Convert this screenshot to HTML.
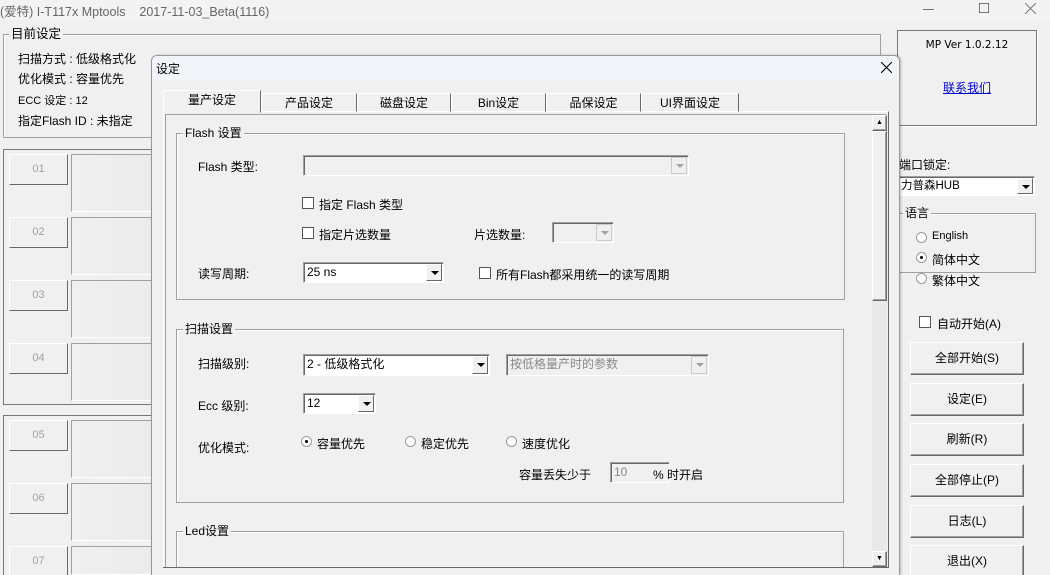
<!DOCTYPE html>
<html style="width:1050px;height:575px;overflow:hidden"><head><meta charset="utf-8"><style>
*{box-sizing:border-box;margin:0;padding:0}
body{width:1050px;height:575px;overflow:hidden;background:#f0f0f0;position:relative;font-family:"Liberation Sans","Noto Sans CJK SC",sans-serif;font-size:12px;color:#000}
.a{position:absolute;white-space:nowrap}
.grp{position:absolute;border:1px solid #a0a0a0;box-shadow:inset 1px 1px 0 #fff}
.gl{position:absolute;top:-8px;left:8px;background:#f0f0f0;padding:0 2px;line-height:14px}
.btn{position:absolute;background:#f0f0f0;border:1px solid;border-color:#fff #696969 #696969 #fff;box-shadow:inset -1px -1px 0 #a0a0a0;text-align:center}
.nb{position:absolute;background:#f0f0f0;border:1px solid;border-color:#fff #696969 #696969 #fff;color:#a0a0a0;text-align:center;line-height:28px;font-size:11px}
.slot{position:absolute;border-left:1px solid #a0a0a0;border-top:1px solid #a0a0a0;border-bottom:1px solid #fff;background:linear-gradient(90deg,#f0f0f0 0%,#ebebeb 100%)}
.combo{position:absolute;background:#fff;border:1px solid;border-color:#a0a0a0 #fff #fff #a0a0a0;box-shadow:inset 1px 1px 0 #696969;line-height:18px;padding-left:3px}
.combo.dis{background:#f0f0f0;color:#888}
.arr{position:absolute;right:1px;top:1px;bottom:1px;width:16px;background:#f0f0f0;border:1px solid;border-color:#fff #696969 #696969 #fff}
.arr:after{content:"";position:absolute;left:4px;top:6px;border:4px solid transparent;border-top:4px solid #000;border-bottom:0}
.combo.dis .arr:after{border-top-color:#a0a0a0}
.cb{position:absolute;width:12px;height:12px;border:1px solid #555;background:#fff}
.rd{position:absolute;width:11px;height:11px;border-radius:50%;border:1px solid #999;background:#fff}
.rd.on:after{content:"";position:absolute;left:3px;top:3px;width:3px;height:3px;border-radius:50%;background:#000}
.tab{position:absolute;top:93px;height:19px;border:1px solid;border-color:#fff #696969 transparent #fff;text-align:center;line-height:18px}
</style></head><body>
<div class="a" style="left:0;top:0;width:1050px;height:20px;background:#f3f3f3"></div>
<div class="a" style="left:0;top:1px;color:#666;font-size:12.5px">(爱特) I-T117x Mptools &nbsp;&nbsp; 2017-11-03_Beta(1116)</div>
<div class="a" style="left:923px;top:9px;width:11px;height:1px;background:#777"></div>
<div class="a" style="left:979px;top:3px;width:10px;height:10px;border:1px solid #777"></div>
<svg class="a" style="left:1025px;top:3px" width="11" height="11"><path d="M0 0L11 11M11 0L0 11" stroke="#777" stroke-width="1"/></svg>

<div class="grp" style="left:3px;top:34px;width:878px;height:104px"><span class="gl" style="left:5px;font-size:12.5px">目前设定</span></div>
<div class="a" style="left:18px;top:50px">扫描方式 : 低级格式化</div>
<div class="a" style="left:18px;top:70px">优化模式 : 容量优先</div>
<div class="a" style="left:18px;top:92px;font-size:11px">ECC 设定 : 12</div>
<div class="a" style="left:18px;top:112px">指定Flash ID : 未指定</div>

<div class="a" style="left:3px;top:149px;width:150px;height:256px;border:1px solid #777;border-right:0"></div>
<div class="a" style="left:3px;top:415px;width:150px;height:170px;border:1px solid #777;border-right:0"></div>
<div class="nb" style="left:9px;top:154px;width:59px;height:31px">01</div>
<div class="slot" style="left:71px;top:154px;width:80px;height:58px"></div>
<div class="nb" style="left:9px;top:217px;width:59px;height:31px">02</div>
<div class="slot" style="left:71px;top:217px;width:80px;height:58px"></div>
<div class="nb" style="left:9px;top:280px;width:59px;height:31px">03</div>
<div class="slot" style="left:71px;top:280px;width:80px;height:58px"></div>
<div class="nb" style="left:9px;top:343px;width:59px;height:31px">04</div>
<div class="slot" style="left:71px;top:343px;width:80px;height:58px"></div>
<div class="nb" style="left:9px;top:420px;width:59px;height:31px">05</div>
<div class="slot" style="left:71px;top:420px;width:80px;height:58px"></div>
<div class="nb" style="left:9px;top:483px;width:59px;height:31px">06</div>
<div class="slot" style="left:71px;top:483px;width:80px;height:58px"></div>
<div class="nb" style="left:9px;top:546px;width:59px;height:31px">07</div>
<div class="slot" style="left:71px;top:546px;width:80px;height:29px"></div>

<div class="a" style="left:897px;top:30px;width:140px;height:96px;border:1px solid #777;box-shadow:1px 1px 0 #fff"></div>
<div class="a" style="left:897px;top:39px;width:140px;text-align:center;font-family:'DejaVu Sans',sans-serif;font-size:10.5px">MP Ver 1.0.2.12</div>
<div class="a" style="left:897px;top:79px;width:140px;text-align:center;color:#0000cc;text-decoration:underline">联系我们</div>
<div class="a" style="left:899px;top:156px">端口锁定:</div>
<div class="combo" style="left:898px;top:176px;width:137px;height:20px;padding-left:2px;font-size:11.5px">力普森HUB<div class="arr"></div></div>
<div class="grp" style="left:899px;top:213px;width:137px;height:60px"><span class="gl" style="left:3px">语言</span></div>
<div class="rd" style="left:916px;top:232px"></div><div class="a" style="left:932px;top:230px;font-size:11px">English</div>
<div class="rd on" style="left:916px;top:252px"></div><div class="a" style="left:932px;top:251px">简体中文</div>
<div class="rd" style="left:916px;top:273px"></div><div class="a" style="left:932px;top:272px">繁体中文</div>
<div class="cb" style="left:919px;top:316px"></div><div class="a" style="left:937px;top:315px">自动开始(A)</div>
<div class="btn" style="left:910px;top:342px;width:114px;height:33px;line-height:31px">全部开始(S)</div>
<div class="btn" style="left:910px;top:383px;width:114px;height:33px;line-height:31px">设定(E)</div>
<div class="btn" style="left:910px;top:423px;width:114px;height:33px;line-height:31px">刷新(R)</div>
<div class="btn" style="left:910px;top:464px;width:114px;height:33px;line-height:31px">全部停止(P)</div>
<div class="btn" style="left:910px;top:505px;width:114px;height:33px;line-height:31px">日志(L)</div>
<div class="btn" style="left:910px;top:545px;width:114px;height:33px;line-height:31px">退出(X)</div>

<div class="a" style="left:151px;top:55px;width:749px;height:520px;background:#f0f0f0;border:1px solid #999;border-bottom:0;border-radius:6px 6px 0 0;box-shadow:1px 0 2px rgba(0,0,0,.25);overflow:hidden">
  <div style="position:absolute;left:0;top:0;width:100%;height:24px;background:#f1f5fa"></div>
  <div class="a" style="left:4px;top:4px">设定</div>
  <svg class="a" style="left:729px;top:6px" width="11" height="11"><path d="M0 0L11 11M11 0L0 11" stroke="#000" stroke-width="1.1"/></svg>
</div>
<div class="a" style="left:163px;top:111px;width:726px;height:460px;border:1px solid;border-color:#fff #696969 #696969 #fff"></div>
<div class="a" style="left:165px;top:114px;width:722px;height:454px;border:1px solid;border-color:#a0a0a0 #fff #fff #a0a0a0"></div>
<div class="tab" style="left:163px;top:90px;width:98px;height:23px;background:#f0f0f0;z-index:2">量产设定</div>
<div class="tab" style="left:261px;width:96px">产品设定</div>
<div class="tab" style="left:357px;width:94px">磁盘设定</div>
<div class="tab" style="left:451px;width:95px">Bin设定</div>
<div class="tab" style="left:546px;width:95px">品保设定</div>
<div class="tab" style="left:641px;width:98px">UI界面设定</div>
<div class="a" style="left:872px;top:115px;width:15px;height:452px;background:repeating-conic-gradient(#f0f0f0 0 25%,#e2e2e2 0 50%) 0 0/2px 2px"></div>
<div class="btn" style="left:872px;top:115px;width:15px;height:16px;font-size:7px;line-height:13px">▲</div>
<div class="btn" style="left:872px;top:131px;width:15px;height:170px"></div>
<div class="btn" style="left:872px;top:551px;width:15px;height:16px;font-size:7px;line-height:13px">▼</div>

<div class="grp" style="left:176px;top:133px;width:669px;height:167px"><span class="gl" style="left:6px">Flash 设置</span></div>
<div class="a" style="left:198px;top:158px">Flash 类型:</div>
<div class="combo dis" style="left:303px;top:155px;width:386px;height:21px"><div class="arr" style="border-color:#ccc"></div></div>
<div class="cb" style="left:302px;top:197px"></div><div class="a" style="left:319px;top:196px">指定 Flash 类型</div>
<div class="cb" style="left:302px;top:227px"></div><div class="a" style="left:319px;top:226px">指定片选数量</div>
<div class="a" style="left:474px;top:226px">片选数量:</div>
<div class="combo dis" style="left:552px;top:222px;width:62px;height:21px"><div class="arr" style="border-color:#ccc"></div></div>
<div class="a" style="left:198px;top:265px">读写周期:</div>
<div class="combo" style="left:303px;top:262px;width:141px;height:21px">25 ns<div class="arr"></div></div>
<div class="cb" style="left:479px;top:267px"></div><div class="a" style="left:496px;top:266px">所有Flash都采用统一的读写周期</div>

<div class="grp" style="left:176px;top:329px;width:668px;height:174px"><span class="gl" style="left:6px">扫描设置</span></div>
<div class="a" style="left:198px;top:355px">扫描级别:</div>
<div class="combo" style="left:303px;top:354px;width:187px;height:22px">2 - 低级格式化<div class="arr"></div></div>
<div class="combo dis" style="left:506px;top:354px;width:203px;height:22px">按低格量产时的参数<div class="arr" style="border-color:#ccc"></div></div>
<div class="a" style="left:198px;top:397px">Ecc 级别:</div>
<div class="combo" style="left:303px;top:393px;width:73px;height:21px">12<div class="arr"></div></div>
<div class="a" style="left:198px;top:439px">优化模式:</div>
<div class="rd on" style="left:301px;top:436px"></div><div class="a" style="left:317px;top:435px">容量优先</div>
<div class="rd" style="left:405px;top:436px"></div><div class="a" style="left:421px;top:435px">稳定优先</div>
<div class="rd" style="left:506px;top:436px"></div><div class="a" style="left:522px;top:435px">速度优化</div>
<div class="a" style="left:519px;top:466px">容量丢失少于</div>
<div class="combo dis" style="left:610px;top:462px;width:60px;height:21px">10</div>
<div class="a" style="left:653px;top:466px">% 时开启</div>

<div class="grp" style="left:176px;top:531px;width:668px;height:36px;border-bottom:0"><span class="gl" style="left:6px">Led设置</span></div>
<div class="a" style="left:163px;top:567px;width:726px;height:8px;background:#f0f0f0;border-top:1px solid #696969"></div>
</body></html>
